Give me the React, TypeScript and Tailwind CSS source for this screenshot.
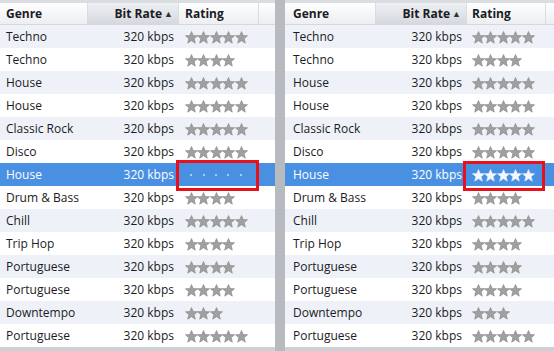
import React from "react";

const rows: [string, number][] = [
  ["Techno", 5],
  ["Techno", 4],
  ["House", 5],
  ["House", 5],
  ["Classic Rock", 5],
  ["Disco", 5],
  ["House", 5],
  ["Drum & Bass", 4],
  ["Chill", 5],
  ["Trip Hop", 4],
  ["Portuguese", 4],
  ["Portuguese", 4],
  ["Downtempo", 3],
  ["Portuguese", 5],
];

const SELECTED = 6;

function Star({ white }: { white?: boolean }) {
  return (
    <svg width="13" height="13" viewBox="0 0 12 12" className="shrink-0">
      <path
        d="M6 0.5 L7.6 4.2 L11.6 4.4 L8.5 7 L9.5 11.2 L6 8.9 L2.5 11.2 L3.5 7 L0.4 4.4 L4.4 4.2 Z"
        fill={white ? "#f4f8fd" : "#a0a0a0"}
        stroke={white ? "#dce9f8" : "#888888"}
        strokeWidth="0.6"
        strokeLinejoin="round"
      />
    </svg>
  );
}

function Stars({ count, mode }: { count: number; mode: "normal" | "dots" | "white" }) {
  if (mode === "dots") {
    return (
      <div className="flex">
        {[0, 1, 2, 3, 4].map((i) => (
          <div key={i} className="w-[12.4px] h-[13px] flex items-center justify-center">
            <div className="w-[2px] h-[2px] bg-[#a9cbf2]" />
          </div>
        ))}
      </div>
    );
  }
  return (
    <div className="flex -space-x-[0.6px]">
      {Array.from({ length: count }).map((_, i) => (
        <Star key={i} white={mode === "white"} />
      ))}
    </div>
  );
}

function Panel({
  genreW,
  genrePl,
  rateW,
  ratingW,
  starPl,
  selectedMode,
}: {
  genreW: string;
  genrePl: string;
  rateW: string;
  ratingW: string;
  starPl: string;
  selectedMode: "dots" | "white";
}) {
  return (
    <div className="flex flex-col h-full min-w-0 flex-1 bg-white">
      <div className="h-[3px] bg-[#d9dce0] shrink-0" />
      {/* header */}
      <div className="flex h-[22px] shrink-0 border-b border-[#d5d7da] bg-gradient-to-b from-white to-[#eceef1] font-bold text-[12px]">
        <div className={`${genreW} ${genrePl} flex items-center border-r border-[#dadcdf]`}>Genre</div>
        <div
          className={`${rateW} flex items-center justify-end pr-[5px] border-r border-[#dadcdf] bg-gradient-to-b from-[#eef0f3] to-[#d5d9df]`}
        >
          Bit Rate
          <span className="text-[9px] ml-[2px] text-[#333] font-normal">▲</span>
        </div>
        <div className={`${ratingW} ${starPl} flex items-center border-r border-[#dadcdf]`}>Rating</div>
        <div className="flex-1" />
      </div>
      {rows.map(([genre, n], i) => {
        const sel = i === SELECTED;
        const bg = sel ? "bg-[#4a90e2] text-white" : i % 2 === 0 ? "bg-[#eef2f8]" : "bg-white";
        return (
          <div key={i} className={`flex h-[23px] shrink-0 items-center text-[12px] pt-[1px] ${bg}`}>
            <div className={`${genreW} ${genrePl} truncate`}>{genre}</div>
            <div className={`${rateW} text-right pr-[5px]`}>320 kbps</div>
            <div className={`${ratingW} ${starPl} flex items-center`}>
              <Stars count={n} mode={sel ? selectedMode : "normal"} />
            </div>
          </div>
        );
      })}
      <div className="flex-1 bg-[#cdd0d4]" />
    </div>
  );
}

export default function App() {
  return (
    <div
      className="relative w-[554px] h-[351px] overflow-hidden flex bg-[#c9ccd0] text-[#1b1b24]"
      style={{ fontFamily: '"Open Sans", "Noto Sans", sans-serif' }}
    >
      <div className="w-[275px] h-full flex shrink-0">
        <Panel
          genreW="w-[88px]"
          genrePl="pl-[6px]"
          rateW="w-[91px]"
          ratingW="w-[80px]"
          starPl="pl-[6px]"
          selectedMode="dots"
        />
      </div>
      <div className="w-[10px] h-full bg-[#b7bbc0] shrink-0" />
      <div className="flex-1 h-full flex">
        <Panel
          genreW="w-[91px]"
          genrePl="pl-[8px]"
          rateW="w-[91px]"
          ratingW="w-[79px]"
          starPl="pl-[5px]"
          selectedMode="white"
        />
      </div>

      {/* highlight boxes */}
      <div className="absolute left-[176px] top-[160px] w-[83px] h-[31px] border-[3px] border-[#e8101a]" />
      <div className="absolute left-[463px] top-[161px] w-[82px] h-[30px] border-[3px] border-[#e8101a]" />
    </div>
  );
}
